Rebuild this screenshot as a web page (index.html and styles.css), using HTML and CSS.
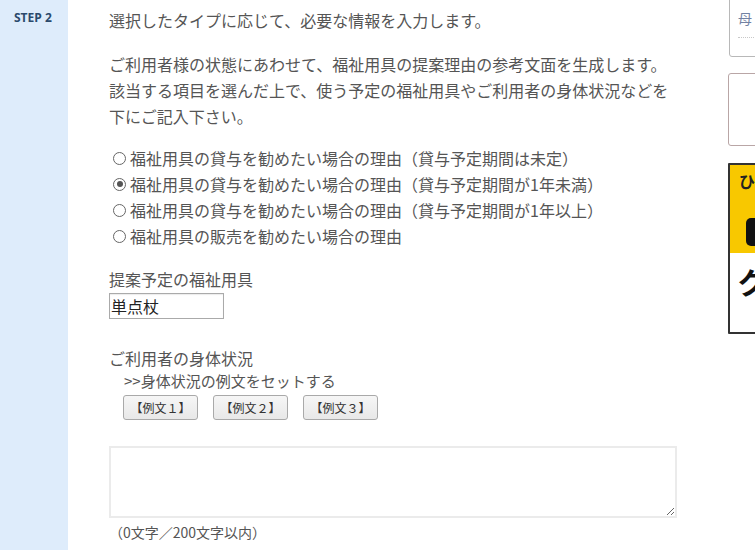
FILE: index.html
```html
<!DOCTYPE html>
<html lang="ja">
<head>
<meta charset="utf-8">
<title>STEP 2</title>
<link rel="stylesheet" href="styles.css">
</head>
<body>
<div class="page">
  <div class="side">
    <div class="step">STEP 2</div>
  </div>
  <main class="main">
    <p class="lead">選択したタイプに応じて、必要な情報を入力します。</p>
    <p class="desc">ご利用者様の状態にあわせて、福祉用具の提案理由の参考文面を生成します。<br>該当する項目を選んだ上で、使う予定の福祉用具やご利用者の身体状況などを<br>下にご記入下さい。</p>
    <div class="radios">
      <label class="radio"><input type="radio" name="t"><span>福祉用具の貸与を勧めたい場合の理由（貸与予定期間は未定）</span></label>
      <label class="radio"><input type="radio" name="t" checked><span>福祉用具の貸与を勧めたい場合の理由（貸与予定期間が1年未満）</span></label>
      <label class="radio"><input type="radio" name="t"><span>福祉用具の貸与を勧めたい場合の理由（貸与予定期間が1年以上）</span></label>
      <label class="radio"><input type="radio" name="t"><span>福祉用具の販売を勧めたい場合の理由</span></label>
    </div>
    <div class="field">
      <div class="label">提案予定の福祉用具</div>
      <input class="text" type="text" value="単点杖">
    </div>
    <div class="field body">
      <div class="label">ご利用者の身体状況</div>
      <div class="hint">&gt;&gt;身体状況の例文をセットする</div>
      <div class="btns">
        <button class="btn">【例文１】</button>
        <button class="btn">【例文２】</button>
        <button class="btn">【例文３】</button>
      </div>
      <textarea class="area"></textarea>
      <div class="count">（0文字／200文字以内）</div>
    </div>
  </main>
  <aside class="aside">
    <div class="box box1"><div class="haha">母</div><div class="dots"></div></div>
    <div class="box box2"></div>
    <div class="box box3">
      <div class="yellow"><div class="hi">ひ</div><div class="blk"></div></div>
      <div class="ku">ク</div>
    </div>
  </aside>
</div>
</body>
</html>
```

FILE: styles.css
```css
html, body {
  margin: 0;
  padding: 0;
  background: #fff;
  overflow: hidden;
}
.page {
  display: flex;
  width: 755px;
  height: 550px;
  overflow: hidden;
  font-family: "Noto Sans CJK JP", "Noto Sans", sans-serif;
  color: #555;
}
.side {
  width: 68px;
  flex: 0 0 68px;
  background: #deecfb;
}
.step {
  font-family: "Open Sans", "DejaVu Sans", sans-serif;
  font-weight: 700;
  font-size: 12px;
  color: #2b4a6c;
  padding: 10px 0 0 14px;
  line-height: 16px;
}
.main {
  flex: 0 0 619px;
  padding: 7px 0 0 41px;
  font-size: 16px;
  line-height: 26px;
}
.main p { margin: 0; }
.lead { margin-bottom: 18px !important; }
.desc { margin-bottom: 16px !important; }
.radios {
  display: flex;
  flex-direction: column;
}
.radio {
  display: flex;
  align-items: center;
  height: 26px;
  padding-left: 4px;
}
.radio input {
  appearance: none;
  -webkit-appearance: none;
  width: 13px;
  height: 13px;
  margin: 0 4px 0 0;
  border: 1px solid #666;
  border-radius: 50%;
  background: #fff;
  position: relative;
}
.radio input:checked::after {
  content: "";
  position: absolute;
  left: 2.5px;
  top: 2.5px;
  width: 6px;
  height: 6px;
  border-radius: 50%;
  background: #555;
}
.field { margin-top: 17px; }
.label { line-height: 26px; }
.text {
  display: block;
  box-sizing: border-box;
  width: 115px;
  height: 26px;
  margin-top: 1px;
  padding: 0 1px;
  border: 1px solid #aaa;
  border-radius: 0;
  font-family: inherit;
  font-size: 16px;
  color: #222;
  background: #fff;
  box-shadow: inset 0 1px 1px rgba(0,0,0,0.08);
}
.body { margin-top: 26px; }
.hint {
  font-size: 15px;
  line-height: 24px;
  margin: -2px 0 0 15px;
}
.btns {
  display: flex;
  gap: 15px;
  margin: 2px 0 0 14px;
}
.btn {
  box-sizing: border-box;
  width: 75px;
  height: 25px;
  padding: 0;
  border: 1px solid #a9a9a9;
  border-radius: 3px;
  background: linear-gradient(#f6f6f6, #e8e8e8);
  font-family: inherit;
  font-size: 12px;
  color: #333;
}
.area {
  display: block;
  box-sizing: border-box;
  width: 568px;
  height: 72px;
  margin-top: 26px;
  border: 2px solid #ebebeb;
  border-radius: 0;
  resize: both;
  font-family: inherit;
}
.count {
  font-size: 14px;
  line-height: 22px;
  margin-top: 3px;
}
.aside {
  flex: 0 0 200px;
}
.box {
  box-sizing: border-box;
  width: 190px;
  border-radius: 3px;
}
.box1 {
  margin-top: -20px;
  height: 77px;
  border: 1px solid #b8b8b8;
  margin-left: 1px;
  padding: 28px 0 0 8px;
}
.haha {
  font-size: 14px;
  line-height: 18px;
  color: #7282a3;
}
.dots {
  margin-top: 10px;
  width: 100px;
  border-top: 1px dotted #c8c8c8;
}
.box2 {
  margin-top: 16px;
  height: 73px;
  border: 1px solid #b9a6a6;
}
.box3 {
  margin-top: 17px;
  height: 171px;
  border: 2px solid #333;
  border-radius: 1px;
  overflow: hidden;
}
.yellow {
  height: 88px;
  background: #f8c800;
  padding: 6px 0 0 9px;
  box-sizing: border-box;
}
.hi {
  font-size: 16px;
  font-weight: 700;
  line-height: 20px;
  color: #222;
}
.blk {
  margin: 27px 0 0 7px;
  width: 60px;
  height: 28px;
  background: #111;
  border-radius: 5px;
}
.ku {
  padding: 10px 0 0 7px;
  font-size: 30px;
  font-weight: 700;
  line-height: 36px;
  color: #111;
}
```
